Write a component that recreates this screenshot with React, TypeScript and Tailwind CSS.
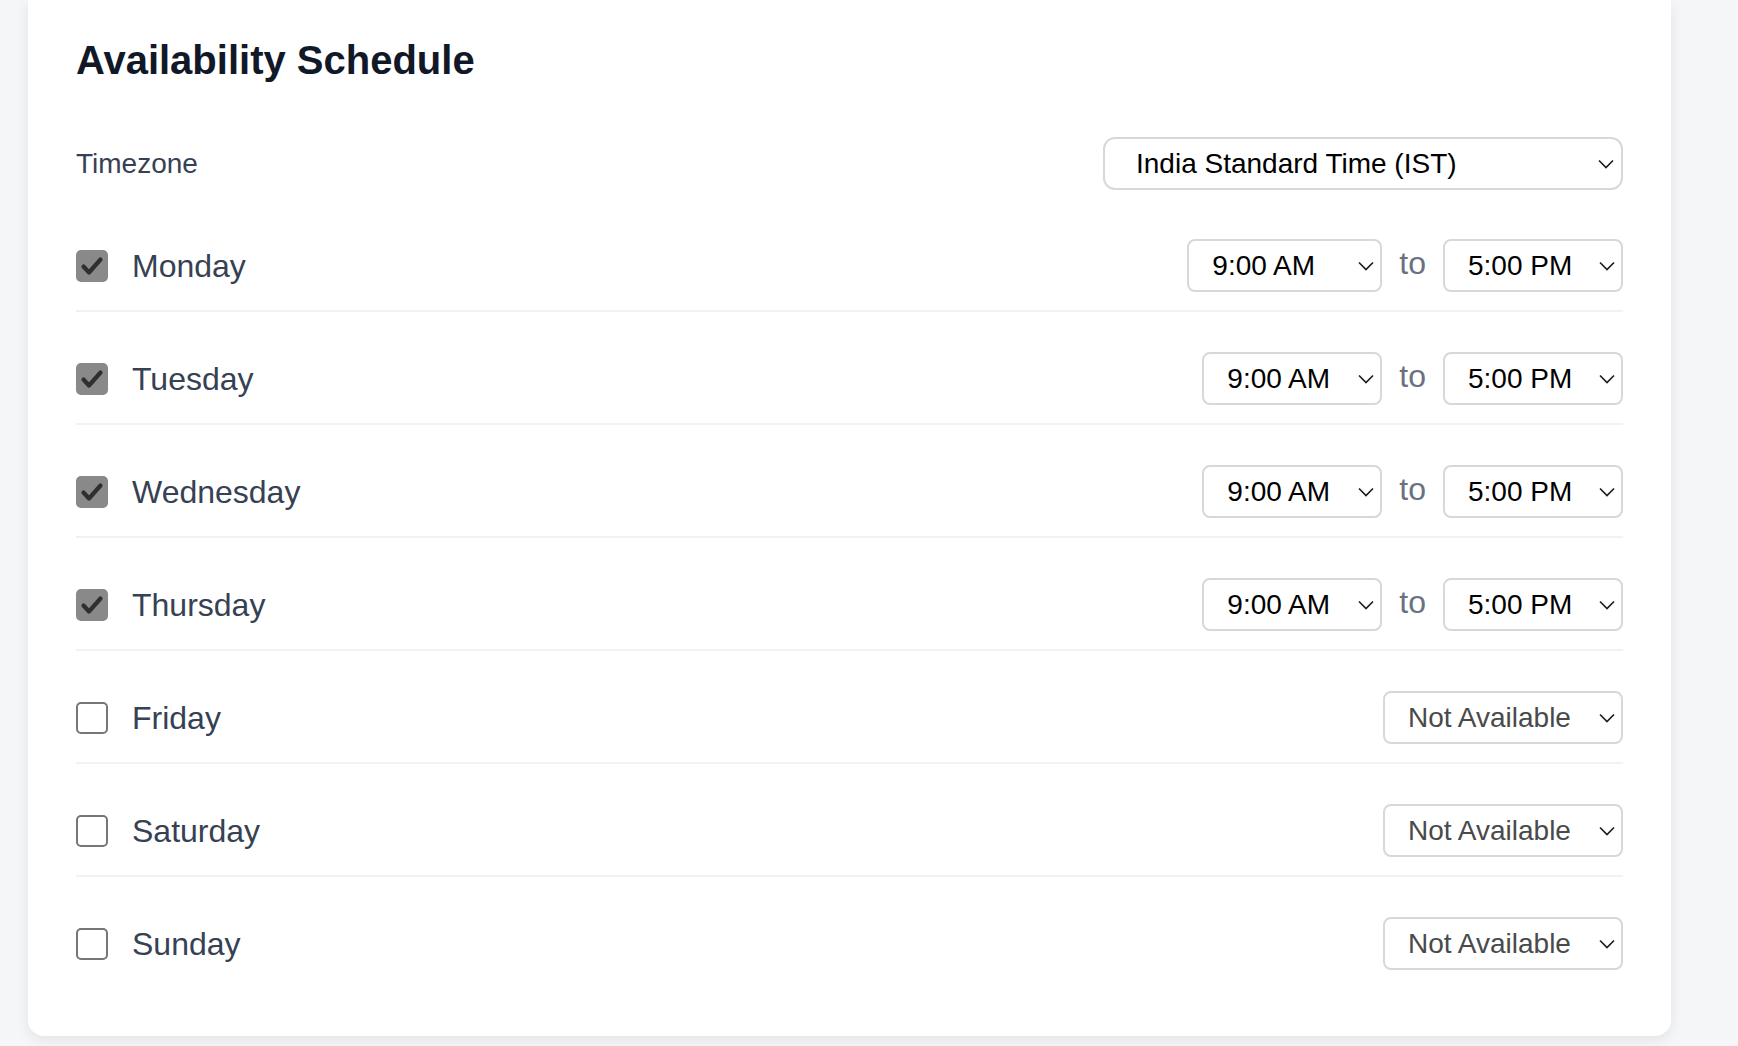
import { useState } from 'react';

const DAYS = [
  { name: 'Monday', on: true, wide: true },
  { name: 'Tuesday', on: true, wide: false },
  { name: 'Wednesday', on: true, wide: false },
  { name: 'Thursday', on: true, wide: false },
  { name: 'Friday', on: false, wide: false },
  { name: 'Saturday', on: false, wide: false },
  { name: 'Sunday', on: false, wide: false },
];

const TIMES = ['8:00 AM', '9:00 AM', '10:00 AM', '12:00 PM', '4:00 PM', '5:00 PM', '6:00 PM'];

function Chevron({ className }: { className: string }) {
  return (
    <svg className={`pointer-events-none absolute top-1/2 -translate-y-1/2 ${className}`} width="16" height="10" viewBox="0 0 16 10" fill="none">
      <path d="M1 1.5l7 7 7-7" stroke="#1f1f1f" strokeWidth="1.7" />
    </svg>
  );
}

function Checkbox({ checked, onClick }: { checked: boolean; onClick: () => void }) {
  if (checked) {
    return (
      <button onClick={onClick} className="flex h-[32px] w-[32px] shrink-0 items-center justify-center rounded-[5px] bg-[#898989]">
        <svg width="32" height="32" viewBox="0 0 32 32" fill="none">
          <path d="M7.5 16.5l5.5 6L24.5 9.5" stroke="#2f2f2f" strokeWidth="4.2" strokeLinecap="round" strokeLinejoin="round" />
        </svg>
      </button>
    );
  }
  return <button onClick={onClick} className="h-[32px] w-[32px] shrink-0 rounded-[5px] border-2 border-[#767676] bg-white" />;
}

export default function App() {
  const [days, setDays] = useState(DAYS);

  const toggle = (i: number) => setDays((d) => d.map((x, j) => (j === i ? { ...x, on: !x.on } : x)));

  return (
    <div className="min-h-screen bg-[#f5f6f8] pl-[28px] font-['Liberation_Sans',Arial,sans-serif]">
      <div className="w-[1643px] rounded-b-2xl bg-white px-[48px] pt-[36px] pb-[48px] shadow-[0_4px_14px_rgba(0,0,0,0.08)]">
        <h2 className="text-[40px] font-bold leading-[48px] text-[#111827]">Availability Schedule</h2>

        {/* Timezone */}
        <div className="mt-[53px] mb-[49px] flex items-center justify-between">
          <span className="text-[28px] text-gray-700">Timezone</span>
          <div className="relative w-[520px]">
            <select defaultValue="IST" className="h-[53px] w-full appearance-none rounded-[12px] border-2 border-[#d6d8dc] bg-white pl-[31px] pr-12 text-[28px] text-black outline-none">
              <option value="IST">India Standard Time (IST)</option>
              <option value="UTC">Coordinated Universal Time (UTC)</option>
              <option value="EST">Eastern Standard Time (EST)</option>
            </select>
            <Chevron className="right-[9px]" />
          </div>
        </div>

        {/* Days */}
        <div className="flex flex-col gap-[40px]">
          {days.map((day, i) => (
            <div key={day.name} className="flex items-center justify-between border-b-2 border-[#f1f2f4] pb-[18px] last:border-b-0">
              <div className="flex items-center gap-[24px]">
                <Checkbox checked={day.on} onClick={() => toggle(i)} />
                <span className="text-[32px] text-gray-700">{day.name}</span>
              </div>

              {day.on ? (
                <div className="flex items-center gap-[17px]">
                  <div className={`relative ${day.wide ? 'w-[195px]' : 'w-[180px]'}`}>
                    <select defaultValue="9:00 AM" className="h-[53px] w-full appearance-none rounded-[8px] border-2 border-[#d6d8dc] bg-white pl-[23px] pr-10 text-[28px] text-black outline-none">
                      {TIMES.map((t) => (
                        <option key={t}>{t}</option>
                      ))}
                    </select>
                    <Chevron className="right-[8px]" />
                  </div>
                  <span className="-mt-[6px] text-[32px] text-gray-500">to</span>
                  <div className="relative w-[180px]">
                    <select defaultValue="5:00 PM" className="h-[53px] w-full appearance-none rounded-[8px] border-2 border-[#d6d8dc] bg-white pl-[23px] pr-10 text-[28px] text-black outline-none">
                      {TIMES.map((t) => (
                        <option key={t}>{t}</option>
                      ))}
                    </select>
                    <Chevron className="right-[8px]" />
                  </div>
                </div>
              ) : (
                <div className="relative w-[240px]">
                  <select defaultValue="na" className="h-[53px] w-full appearance-none rounded-[8px] border-2 border-[#d6d8dc] bg-white pl-[23px] pr-10 text-[28px] text-[#4a4a4a] outline-none">
                    <option value="na">Not Available</option>
                  </select>
                  <Chevron className="right-[8px]" />
                </div>
              )}
            </div>
          ))}
        </div>
      </div>
    </div>
  );
}
